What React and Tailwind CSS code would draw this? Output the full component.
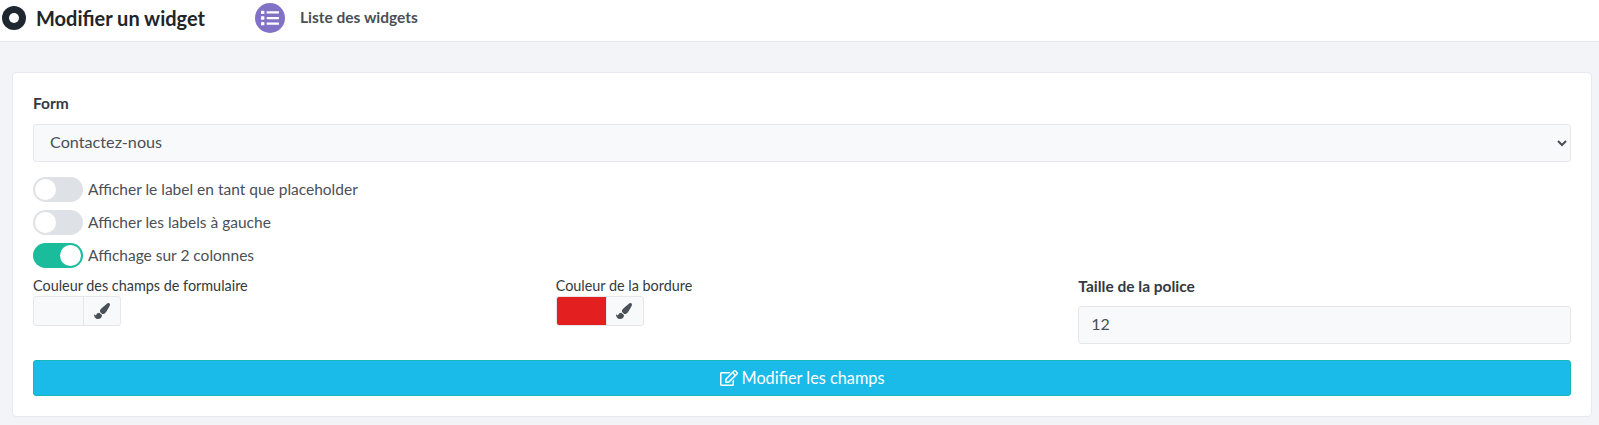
import { FaList, FaPaintBrush, FaRegEdit } from 'react-icons/fa';

function Toggle({ on, label }) {
  return (
    <div className="flex items-center h-[25px] mb-2">
      <span
        className={
          on
            ? 'flex justify-end w-[50px] h-[25px] rounded-full bg-[#1abc9c] p-[2px]'
            : 'flex justify-start w-[50px] h-[25px] rounded-full bg-[#dee2e6] p-[2px]'
        }
      >
        <span className="w-[21px] h-[21px] rounded-full bg-white" />
      </span>
      <span className="ml-[5px] text-[15.5px] text-[#495057]">{label}</span>
    </div>
  );
}

function ColorPicker({ label, swatch }) {
  return (
    <div>
      <div className="text-[14.4px] leading-[20px] text-[#343a40]">{label}</div>
      <div className="flex w-[88px] h-[30px] rounded-[3px] border border-[#e5e7eb] bg-[#f8f9fa] overflow-hidden">
        <span className={swatch} />
        <span className="flex flex-1 items-center justify-center border-l border-[#e5e7eb] pr-[1px]">
          <FaPaintBrush className="w-[16px] h-[16px] text-[#495057]" />
        </span>
      </div>
    </div>
  );
}

function App() {
  return (
    <div className="min-h-screen bg-[#f3f4f8] font-['Lato',sans-serif]">
      <div className="flex items-center h-[42px] pb-[5px] bg-white border-b border-[#e3e6ea]">
        <span className="ml-[2px] flex items-center justify-center w-[24px] h-[24px] rounded-full bg-[#1f2730]">
          <span className="w-[10px] h-[10px] rounded-full bg-white" />
        </span>
        <h1 className="ml-[10px] text-[20px] font-bold text-[#212529]">Modifier un widget</h1>
        <span className="ml-[50px] flex items-center justify-center w-[30px] h-[30px] rounded-full bg-[#8272c6]">
          <FaList className="w-[18px] h-[18px] text-white" />
        </span>
        <span className="ml-[15px] text-[15.5px] font-bold text-[#495057]">Liste des widgets</span>
      </div>

      <div className="pt-[30px] pl-[12px] pr-[7px]">
        <div className="bg-white border border-[#e6e9f0] rounded-[4px] pt-[20px] px-[20px] pb-[20px]">
          <div className="text-[15.5px] leading-[21px] font-bold text-[#343a40] mb-[10px]">Form</div>
          <select
            defaultValue="Contactez-nous"
            className="block w-full h-[38px] pl-[12px] pb-[3px] text-[16.2px] text-[#495057] bg-[#f8f9fa] border border-[#e5e7eb] rounded-[3px] mb-[15px]"
          >
            <option>Contactez-nous</option>
          </select>

          <Toggle label="Afficher le label en tant que placeholder" />
          <Toggle label="Afficher les labels à gauche" />
          <Toggle on label="Affichage sur 2 colonnes" />

          <div className="grid grid-cols-3 gap-x-[30px] mt-[1px]">
            <ColorPicker label="Couleur des champs de formulaire" swatch="w-[49px]" />
            <ColorPicker label="Couleur de la bordure" swatch="w-[49px] bg-[#e31f1f]" />
            <div>
              <div className="text-[15.5px] leading-[21px] font-bold text-[#343a40] mb-[9px]">Taille de la police</div>
              <input
                defaultValue="12"
                className="block w-full h-[38px] px-[12px] pb-[3px] text-[16px] text-[#495057] bg-[#f8f9fa] border border-[#e5e7eb] rounded-[3px]"
              />
            </div>
          </div>

          <button className="flex items-center justify-center gap-[4px] w-full h-[36px] mt-[16px] text-[16.3px] text-white bg-[#1abbe9] border border-[#17b5b5] rounded-[3px]">
            <FaRegEdit className="w-[18px] h-[18px]" />
            Modifier les champs
          </button>
        </div>
      </div>
    </div>
  );
}

export default App;
